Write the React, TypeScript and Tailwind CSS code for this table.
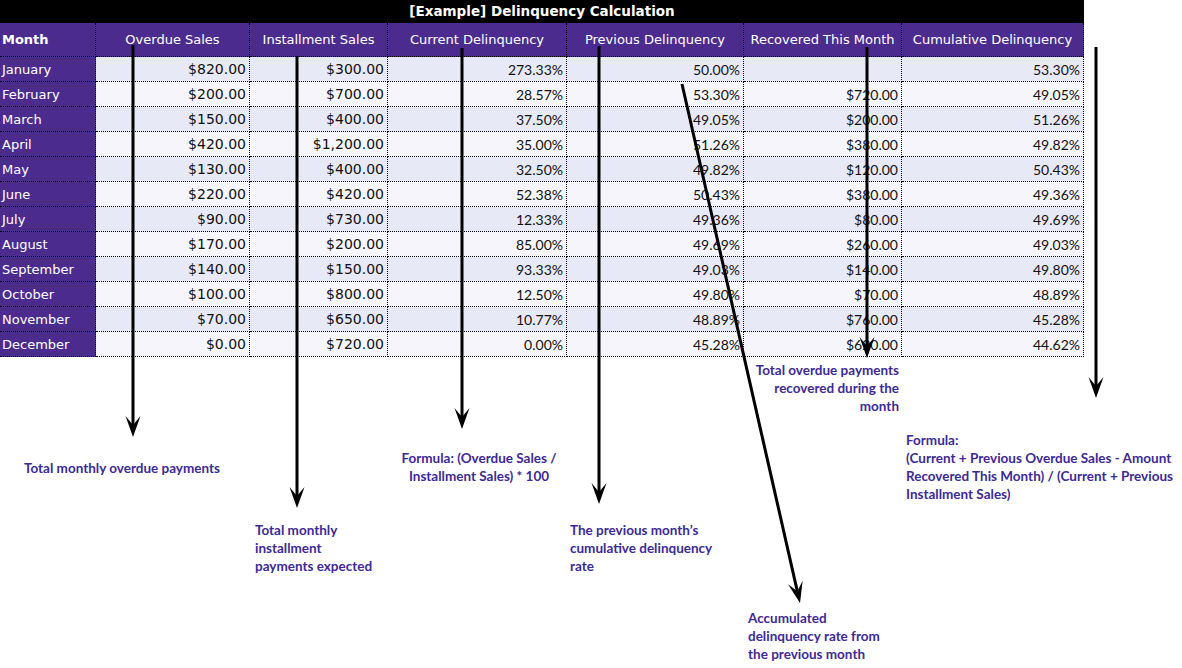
import React from "react";

const rows: string[][] = [
  ["January", "$820.00", "$300.00", "273.33%", "50.00%", "", "53.30%"],
  ["February", "$200.00", "$700.00", "28.57%", "53.30%", "$720.00", "49.05%"],
  ["March", "$150.00", "$400.00", "37.50%", "49.05%", "$200.00", "51.26%"],
  ["April", "$420.00", "$1,200.00", "35.00%", "51.26%", "$380.00", "49.82%"],
  ["May", "$130.00", "$400.00", "32.50%", "49.82%", "$120.00", "50.43%"],
  ["June", "$220.00", "$420.00", "52.38%", "50.43%", "$380.00", "49.36%"],
  ["July", "$90.00", "$730.00", "12.33%", "49.36%", "$80.00", "49.69%"],
  ["August", "$170.00", "$200.00", "85.00%", "49.69%", "$260.00", "49.03%"],
  ["September", "$140.00", "$150.00", "93.33%", "49.03%", "$140.00", "49.80%"],
  ["October", "$100.00", "$800.00", "12.50%", "49.80%", "$70.00", "48.89%"],
  ["November", "$70.00", "$650.00", "10.77%", "48.89%", "$760.00", "45.28%"],
  ["December", "$0.00", "$720.00", "0.00%", "45.28%", "$620.00", "44.62%"],
];

const headers = [
  "Overdue Sales",
  "Installment Sales",
  "Current Delinquency",
  "Previous Delinquency",
  "Recovered This Month",
  "Cumulative Delinquency",
];

const mont = "font-['DejaVu_Sans','Noto_Sans',sans-serif]";
const cal = "font-['Lato','Noto_Sans',sans-serif]";
const note = `absolute text-[13.5px] leading-[18px] font-bold text-[#3d2a96] ${cal}`;

function Arrow({ x1, y1, x2, y2 }: { x1: number; y1: number; x2: number; y2: number }) {
  const dx = x2 - x1;
  const dy = y2 - y1;
  const len = Math.sqrt(dx * dx + dy * dy);
  const ux = dx / len;
  const uy = dy / len;
  const px = -uy;
  const py = ux;
  const L = 21;
  const W = 7.5;
  const N = 12;
  const bx = x2 - ux * L;
  const by = y2 - uy * L;
  const nx = x2 - ux * N;
  const ny = y2 - uy * N;
  const pts = `${x2},${y2} ${bx + px * W},${by + py * W} ${nx},${ny} ${bx - px * W},${by - py * W}`;
  return (
    <g>
      <line x1={x1} y1={y1} x2={nx} y2={ny} stroke="#000" strokeWidth={3} />
      <polygon points={pts} fill="#000" />
    </g>
  );
}

export default function App() {
  return (
    <div className="relative w-[1182px] h-[668px] bg-white overflow-hidden">
      <div className="w-[1084px]">
        <div className={`h-[23px] bg-black text-white text-[13.5px] font-bold flex items-center justify-center ${mont}`}>
          [Example] Delinquency Calculation
        </div>
        <div className="grid grid-cols-[96px_154px_138px_179px_177px_158px_182px]">
          <div className={`h-[34px] bg-[#4b2c8e] text-white text-[13px] font-bold flex items-center pl-[2px] border-r border-b border-dotted border-black ${mont}`}>
            Month
          </div>
          {headers.map((h) => (
            <div
              key={h}
              className={`h-[34px] bg-[#4b2c8e] text-white text-[13px] flex items-center justify-center border-r border-b border-dotted border-black last:border-r-0 ${mont}`}
            >
              {h}
            </div>
          ))}
          {rows.map((r, i) => {
            const bg = i % 2 === 0 ? "bg-[#e8e9f7]" : "bg-[#f5f5fb]";
            return (
              <React.Fragment key={r[0]}>
                <div className={`h-[25px] bg-[#4b2c8e] text-white text-[13px] flex items-center pt-[1px] pl-[2px] border-r border-b border-dotted border-black ${mont}`}>
                  {r[0]}
                </div>
                {r.slice(1).map((v, j) => (
                  <div
                    key={j}
                    className={`h-[25px] ${bg} text-[#111] flex items-center justify-end pt-[1px] pr-[3px] border-r border-b border-dotted border-black ${
                      j < 2 ? `${mont} text-[14px]` : `${cal} text-[14px]`
                    }`}
                  >
                    {v}
                  </div>
                ))}
              </React.Fragment>
            );
          })}
        </div>
      </div>

      <svg className="absolute top-0 left-0 pointer-events-none" width={1182} height={668}>
        <Arrow x1={133} y1={45} x2={133} y2={437} />
        <Arrow x1={297} y1={56} x2={297} y2={508} />
        <Arrow x1={462} y1={48} x2={462} y2={429} />
        <Arrow x1={599} y1={46} x2={599} y2={504} />
        <Arrow x1={682} y1={84} x2={800} y2={603} />
        <Arrow x1={867} y1={47} x2={867} y2={358} />
        <Arrow x1={1096} y1={47} x2={1096} y2={398} />
      </svg>

      <div className={`${note} left-[24px] top-[459px]`}>Total monthly overdue payments</div>
      <div className={`${note} left-[255px] top-[521px]`}>
        Total monthly
        <br />
        installment
        <br />
        payments expected
      </div>
      <div className={`${note} left-[393px] top-[449px] w-[172px] text-center`}>
        Formula: (Overdue Sales /
        <br />
        Installment Sales) * 100
      </div>
      <div className={`${note} left-[570px] top-[521px]`}>
        The previous month’s
        <br />
        cumulative delinquency
        <br />
        rate
      </div>
      <div className={`${note} left-[748px] top-[609px]`}>
        Accumulated
        <br />
        delinquency rate from
        <br />
        the previous month
      </div>
      <div className={`${note} right-[283px] top-[361px] text-right`}>
        Total overdue payments
        <br />
        recovered during the
        <br />
        month
      </div>
      <div className={`${note} left-[906px] top-[431px]`}>
        Formula:
        <br />
        (Current + Previous Overdue Sales - Amount
        <br />
        Recovered This Month) / (Current + Previous
        <br />
        Installment Sales)
      </div>
    </div>
  );
}
